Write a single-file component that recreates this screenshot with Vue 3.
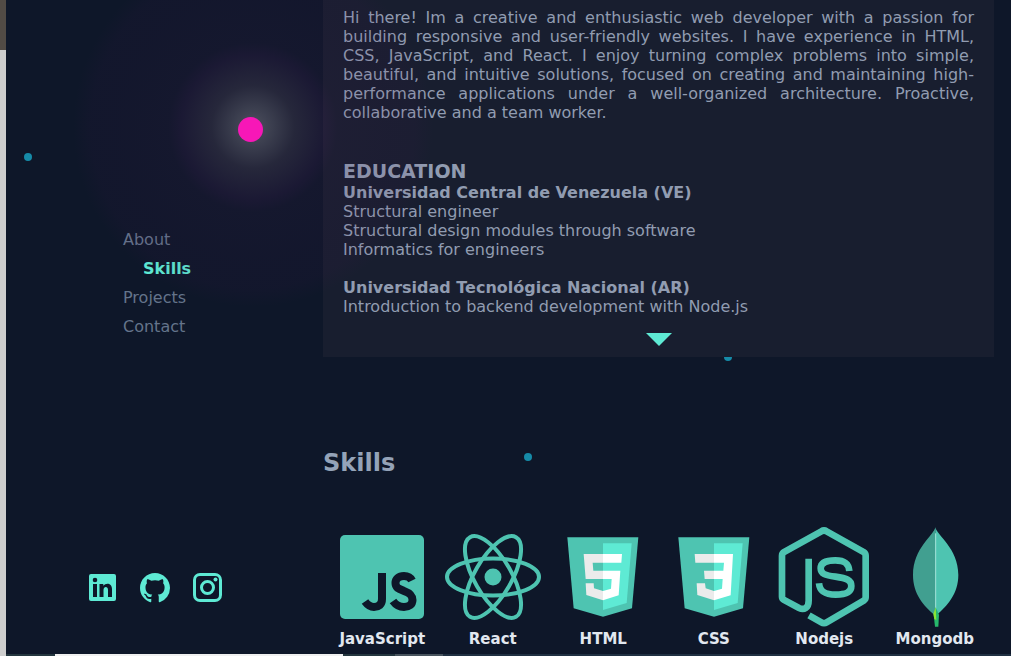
<script setup>
const links = [
  { id: 'about', label: 'About' },
  { id: 'skills', label: 'Skills', active: true },
  { id: 'projects', label: 'Projects' },
  { id: 'contact', label: 'Contact' },
]
</script>

<template>
  <div class="page">
    <div class="edge-left"></div>
    <span class="dot dot-a"></span>
    <span class="dot dot-b"></span>
    <span class="dot dot-c"></span>
    <div class="glow"></div>
    <span class="pointer"></span>

    <aside class="sidebar">
      <nav class="nav">
        <a v-for="l in links" :key="l.id" :href="'#' + l.id" :class="{ active: l.active }">{{ l.label }}</a>
      </nav>
      <div class="social">
        <a href="#linkedin" aria-label="LinkedIn">
          <svg viewBox="0 0 30 30">
            <path fill-rule="evenodd" d="M3 1H26Q28 1 28 3V26Q28 28 26 28H3Q1 28 1 26V3Q1 1 3 1ZM5 11V24H9V11ZM7 4.700A2.300 2.300 0 1 0 7 9.300A2.300 2.300 0 1 0 7 4.700ZM11.500 11V24H15.500V17C15.500 13.300 20 13 20 17V24H24V16C24 10 18 9.300 15.300 12.800V11Z" />
          </svg>
        </a>
        <a href="#github" aria-label="GitHub">
          <svg viewBox="0 0 16 16">
            <path d="M8 0C3.580 0 0 3.580 0 8c0 3.540 2.290 6.530 5.470 7.590.4.070.55-.17.55-.38 0-.19-.01-.82-.01-1.490-2.010.37-2.530-.49-2.690-.94-.09-.23-.48-.94-.82-1.130-.28-.15-.68-.52-.01-.53.63-.01 1.080.58 1.230.82.72 1.210 1.870.87 2.330.66.070-.52.28-.87.51-1.070-1.780-.2-3.640-.89-3.640-3.950 0-.87.31-1.590.82-2.150-.08-.2-.36-1.020.08-2.120 0 0 .67-.21 2.200.82.64-.18 1.320-.27 2-.27s1.360.09 2 .27c1.530-1.040 2.200-.82 2.200-.82.44 1.100.16 1.920.08 2.120.51.56.82 1.270.82 2.150 0 3.070-1.870 3.750-3.650 3.950.29.25.54.73.54 1.480 0 1.070-.01 1.930-.01 2.200 0 .21.15.46.55.38A8.010 8.010 0 0 0 16 8c0-4.420-3.580-8-8-8Z" />
          </svg>
        </a>
        <a href="#instagram" aria-label="Instagram">
          <svg viewBox="0 0 30 30">
            <rect x="2.500" y="1.500" width="26" height="26" rx="5.500" class="line" />
            <circle cx="15.500" cy="14.500" r="6" class="line" />
            <circle cx="23.500" cy="6.500" r="2" />
          </svg>
        </a>
      </div>
    </aside>

    <main class="content">
      <section id="about" class="card">
        <p class="intro">Hi there! Im a creative and enthusiastic web developer with a passion for building responsive and user-friendly websites. I have experience in HTML, CSS, JavaScript, and React. I enjoy turning complex problems into simple, beautiful, and intuitive solutions, focused on creating and maintaining high-performance applications under a well-organized architecture. Proactive, collaborative and a team worker.</p>
        <h2>EDUCATION</h2>
        <h3>Universidad Central de Venezuela (VE)</h3>
        <p>Structural engineer</p>
        <p>Structural design modules through software</p>
        <p>Informatics for engineers</p>
        <h3 class="next">Universidad Tecnológica Nacional (AR)</h3>
        <p>Introduction to backend development with Node.js</p>
        <button class="more" type="button" aria-label="Show more">
          <svg viewBox="0 0 26 13"><path d="M0 0H26L13 13Z" /></svg>
        </button>
      </section>

      <section id="skills" class="skills">
        <h1>Skills</h1>
        <ul>
          <li>
            <svg viewBox="-8 -8 100 100">
              <rect width="84" height="84" rx="5" class="mint" />
              <path class="ink" d="M42 38V64C42 70 38.500 72 34 72C30 72 27.500 70 25 66.500" />
              <path class="ink" d="M72 45.500C70.500 42.500 67.500 41 64 41C58.500 41 55.500 44 55.500 48C55.500 53 59 54 64 56C69.500 58 72.500 60 72.500 65C72.500 69.500 69 72 64 72C58.500 72 55.500 69.500 53 66" />
            </svg>
            <span>JavaScript</span>
          </li>
          <li>
            <svg viewBox="-50 -50 100 100">
              <circle r="8.500" class="mint" />
              <g class="orbit">
                <ellipse rx="46" ry="18.500" />
                <ellipse rx="46" ry="18.500" transform="rotate(60)" />
                <ellipse rx="46" ry="18.500" transform="rotate(120)" />
              </g>
            </svg>
            <span>React</span>
          </li>
          <li>
            <svg viewBox="10 21 300 300">
              <path class="mint" d="M53 52H266L247 265L160 290L72 265Z" />
              <path class="bright" d="M160 70H246L231 249L160 270Z" />
              <path fill="#ebebeb" d="M160 102H102L108 177H160V152H131L129 128H160ZM108 190H132L133 205L160 213V241L110 225Z" />
              <path fill="#fff" d="M160 102H217L215 128H160ZM160 152H212L207 226L160 241V213L184 206L186 177H160Z" />
            </svg>
            <span>HTML</span>
          </li>
          <li>
            <svg viewBox="10 21 300 300">
              <path class="mint" d="M53 52H266L247 265L160 290L72 265Z" />
              <path class="bright" d="M160 70H246L231 249L160 270Z" />
              <path fill="#ebebeb" d="M160 102H102L104 128H160ZM160 152H130L132 177H160ZM108 190H133L135 205L160 213V241L110 225Z" />
              <path fill="#fff" d="M160 102H217L210 226L160 241V213L184 206L186 177H160V152H188L190 128H160Z" />
            </svg>
            <span>CSS</span>
          </li>
          <li>
            <svg viewBox="13 21 300 300">
              <g class="node">
                <path d="M117 116V242C117 264 103 271 88 264L43 240Q37 236 37 230V107Q37 100 43 96L155 34Q163 29 171 34L282 96Q288 100 288 107V232Q288 238 282 242L171 307Q163 312 155 307L118 286" />
                <path d="M239 153C237 130 225 121 197 121C168 121 153 129 153 145C153 162 167 166 197 170C232 175 245 180 245 198C245 218 228 224 198 224C165 224 150 214 148 190" />
              </g>
            </svg>
            <span>Nodejs</span>
          </li>
          <li>
            <svg viewBox="343 21 300 300">
              <path fill="#419f90" d="M494 22C490 46 427 84 427 165C427 222 459 258 493 286Z" />
              <path class="mint" d="M494 22C498 46 563 84 563 165C563 222 529 258 497 286H494Z" />
              <path stroke="#a5e8dd" stroke-width="3" d="M495 40V270" />
              <path fill="#27b86b" d="M495 262L505 284L503 320H493L489 284Z" />
              <path fill="#8de534" d="M495 262L497 300L491 297L488 282Z" />
            </svg>
            <span>Mongodb</span>
          </li>
        </ul>
      </section>
    </main>

    <div class="edge-bottom"><i></i><i></i><i></i><i></i><i></i></div>
  </div>
</template>

<style>
html, body { margin: 0; background: #0e1729; }
</style>

<style scoped>
.page {
  position: relative;
  display: grid;
  grid-template-columns: 6px 317px minmax(0, 1fr);
  min-height: 100vh;
  overflow: hidden;
  background: #0e1729;
  color: #94a3b8;
  font-family: "DejaVu Sans", Verdana, sans-serif;
  font-size: 16px;
  line-height: 19px;
}
h1, h2, h3, p, ul { margin: 0; padding: 0; }
.edge-left { background: linear-gradient(#514b45 0 50px, #cecece 50px); }
.edge-bottom {
  position: absolute;
  inset: auto 0 0 6px;
  height: 2px;
  display: flex;
}
.edge-bottom i { background: #24363f; width: 49px; }
.edge-bottom i:nth-child(2) { background: #f0f0f0; width: 288px; }
.edge-bottom i:nth-child(3) { width: 52px; }
.edge-bottom i:nth-child(4) { background: #48545e; width: 48px; }
.edge-bottom i:nth-child(5) { background: #203042; flex: 1; }

.dot {
  position: absolute;
  width: 8px;
  height: 8px;
  border-radius: 50%;
  background: #168ba8;
}
.dot-a { left: 24px; top: 153px; }
.dot-b { left: 724px; top: 353px; }
.dot-c { left: 524px; top: 453px; }
.glow {
  position: absolute;
  z-index: 2;
  left: 73px;
  top: -53px;
  width: 360px;
  height: 360px;
  pointer-events: none;
  background: radial-gradient(circle closest-side,
    rgba(240, 225, 230, .28) 0, rgba(235, 215, 225, .2) 11%, rgba(200, 150, 180, .13) 23%,
    rgba(120, 40, 130, .12) 40%, rgba(80, 30, 90, .1) 47%, rgba(80, 20, 90, .08) 75%, rgba(80, 20, 90, .07) 90%, rgba(80, 20, 90, 0) 100%);
}
.pointer {
  position: absolute;
  z-index: 3;
  left: 238px;
  top: 117px;
  width: 25px;
  height: 25px;
  border-radius: 50%;
  background: #f717b7;
}

.sidebar {
  display: flex;
  flex-direction: column;
  justify-content: space-between;
  box-sizing: border-box;
  height: 100vh;
  padding: 230px 0 53px;
}
.nav {
  display: flex;
  flex-direction: column;
  gap: 10px;
  padding-left: 117px;
}
.nav a { color: #64748b; text-decoration: none; }
.nav .active { padding-left: 20px; color: #5eead4; font-weight: bold; }
.social { display: flex; gap: 22px; padding-left: 82px; }
.social a { display: block; width: 30px; height: 30px; }
.social svg { display: block; fill: #5eead4; }
.social .line { fill: none; stroke: #5eead4; stroke-width: 3; }

.content { padding-right: 17px; }
.card {
  position: relative;
  z-index: 1;
  padding: 8px 20px 11px;
  background: #181e2f;
  color: #919cb1;
}
.intro { text-align: justify; }
h2 { margin-top: 38px; font-size: 19px; line-height: 23px; }
h3 { font-size: 16px; }
.next { margin-top: 19px; }
.more {
  display: block;
  width: 26px;
  margin: 17px auto 0;
  padding: 0;
  border: 0;
  background: none;
}
.more svg { display: block; fill: #5eead4; }
.skills { padding-top: 91px; }
h1 { font-size: 24px; line-height: 30px; }
ul {
  display: grid;
  grid-template-columns: repeat(6, 1fr);
  padding: 49px 4px 6px;
  list-style: none;
}
li {
  display: flex;
  flex-direction: column;
  align-items: center;
  gap: 3px;
  color: #e2e8f0;
  font-weight: bold;
  font-size: 15px;
}
li svg { width: 100px; height: 100px; }
.mint { fill: #4ec4b1; }
.bright { fill: #5eead4; }
.ink { fill: none; stroke: #0e1729; stroke-width: 8; }
.orbit { fill: none; stroke: #4ec4b1; stroke-width: 4; }
.node { fill: none; stroke: #4ec4b1; stroke-width: 20; }
</style>
